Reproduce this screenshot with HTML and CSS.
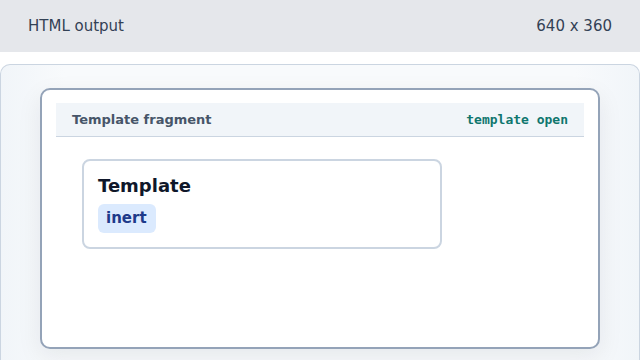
FILE: index.html
```html
<!DOCTYPE html>
<html lang="en">
<head>
  <meta charset="UTF-8" />
  <title>HTML output</title>
  <link rel="stylesheet" href="styles.css">
</head>
<body>
  <div class="topbar">
    <span>HTML output</span>
    <span>640 x 360</span>
  </div>

  <div class="stage">
    <div class="card">
      <div class="card-head">
        <span class="head-title">Template fragment</span>
        <code class="head-tag">template open</code>
      </div>
      <div class="fragment">
        <h3>Template</h3>
        <span class="badge">inert</span>
      </div>
    </div>
  </div>
</body>
</html>
```

FILE: styles.css
```css
body {
  margin: 0;
  font-family: 'DejaVu Sans', sans-serif;
  background: #fff;
  height: 360px;
  overflow: hidden;
}
.topbar {
  height: 52px;
  background: #e5e7eb;
  display: flex;
  justify-content: space-between;
  align-items: center;
  padding: 0 28px;
  color: #334155;
  font-size: 15px;
}
.stage {
  margin-top: 12px;
  height: 296px;
  border: 1px solid #cbd5e1;
  border-bottom: none;
  border-radius: 10px 10px 0 0;
  background: linear-gradient(to right, #f1f5f9, #f8fafc 10%, #f8fafc 90%, #f1f5f9);
  padding: 23px 39px 0;
  box-sizing: border-box;
}
.card {
  height: 261px;
  box-sizing: border-box;
  background: #fff;
  border: 2px solid #94a3b8;
  border-radius: 10px;
  padding: 13px 14px;
  box-shadow: 0 8px 24px rgba(15, 23, 42, 0.08);
}
.card-head {
  height: 33px;
  background: #f1f5f9;
  border-bottom: 1px solid #cbd5e1;
  display: flex;
  justify-content: space-between;
  align-items: center;
  padding: 0 16px;
}
.head-title {
  font-size: 13px;
  font-weight: bold;
  color: #475569;
}
.head-tag {
  font-family: 'DejaVu Sans Mono', monospace;
  font-size: 13px;
  font-weight: bold;
  color: #0f766e;
}
.fragment {
  margin: 22px 0 0 26px;
  width: 360px;
  height: 90px;
  box-sizing: border-box;
  border: 2px solid #cbd5e1;
  border-radius: 8px;
  padding: 14px 14px;
}
.fragment h3 {
  margin: 0 0 8px;
  font-size: 18px;
  color: #0f172a;
}
.badge {
  display: inline-block;
  background: #dbeafe;
  color: #1e3a8a;
  font-weight: bold;
  font-size: 15px;
  padding: 5px 9px 6px 8px;
  border-radius: 6px;
}
```
